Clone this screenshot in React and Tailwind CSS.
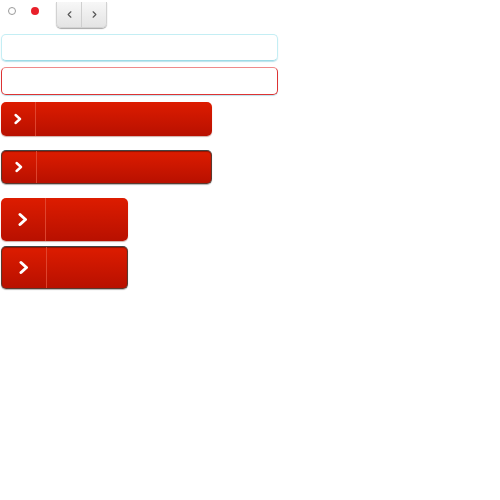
import { ChevronLeft, ChevronRight } from "lucide-react";

const Arrow = ({ big }) => (
  <svg
    viewBox="0 0 10 14"
    className={big ? "w-[10px] h-[15px]" : "w-[8px] h-[12px]"}
    fill="none"
    stroke="white"
    strokeWidth="3"
    strokeLinecap="round"
    strokeLinejoin="round"
  >
    <path d="M2 2 L7.5 7 L2 12" />
  </svg>
);

const RedButton = ({ big, pressed }) => (
  <button
    className={
      "flex items-stretch rounded-[5px] bg-gradient-to-b from-[#dd1c00] to-[#b81000] " +
      (big ? "w-[127px] h-[43px] " : "w-[211px] h-[34px] ") +
      (pressed
        ? "border border-[#5a3a30] border-t-[#444] shadow-[inset_0_1px_1px_rgba(0,0,0,0.35),0_1px_1px_rgba(0,0,0,0.3)]"
        : "shadow-[0_1px_1px_rgba(120,20,0,0.35)]")
    }
  >
    <span
      className={
        "flex items-center justify-center border-r border-[#e4503a]/80 " +
        (big ? "w-[45px]" : "w-[35px]")
      }
    >
      <Arrow big={big} />
    </span>
    <span className="flex-1" />
  </button>
);

export default function App() {
  return (
    <div className="w-[500px] h-[500px] bg-white font-['Liberation_Sans',sans-serif]">
      <div className="flex items-start h-[30px] pl-[8px]">
        <span className="mt-[7px] w-[8px] h-[8px] rounded-full border border-[#9a9a9a] bg-white" />
        <span className="mt-[7px] w-[8px] h-[8px] rounded-full bg-[#e8202a] ml-[15px]" />
        <div className="flex ml-[17px] mt-[2px] h-[26px] w-[51px] rounded-b-[5px] bg-gradient-to-b from-[#f7f7f7] to-[#e4e4e4] border border-t-0 border-[#d2d2d2] shadow-[0_1px_1px_rgba(0,0,0,0.35)]">
          <span className="flex-1 flex items-center justify-center border-r border-[#cfcfcf] text-[#555]">
            <ChevronLeft size={11} strokeWidth={2.5} />
          </span>
          <span className="flex-1 flex items-center justify-center text-[#555]">
            <ChevronRight size={11} strokeWidth={2.5} />
          </span>
        </div>
      </div>
      <div className="flex flex-col gap-[6px] mt-[4px] ml-[1px] w-[277px]">
        <input className="h-[27px] rounded-[5px] border border-[#c4eef4] border-b-[#9edbe6] shadow-[0_1px_1px_rgba(120,200,220,0.5)] outline-none" />
        <input className="h-[28px] rounded-[5px] border border-[#d33] border-t-[#ef8a8a] shadow-[0_1px_1px_rgba(120,200,220,0.5)] outline-none" />
      </div>
      <div className="flex flex-col items-start ml-[1px] mt-[7px]">
        <RedButton />
        <div className="mt-[14px]"><RedButton pressed /></div>
        <div className="mt-[14px]"><RedButton big /></div>
        <div className="mt-[5px]"><RedButton big pressed /></div>
      </div>
    </div>
  );
}
